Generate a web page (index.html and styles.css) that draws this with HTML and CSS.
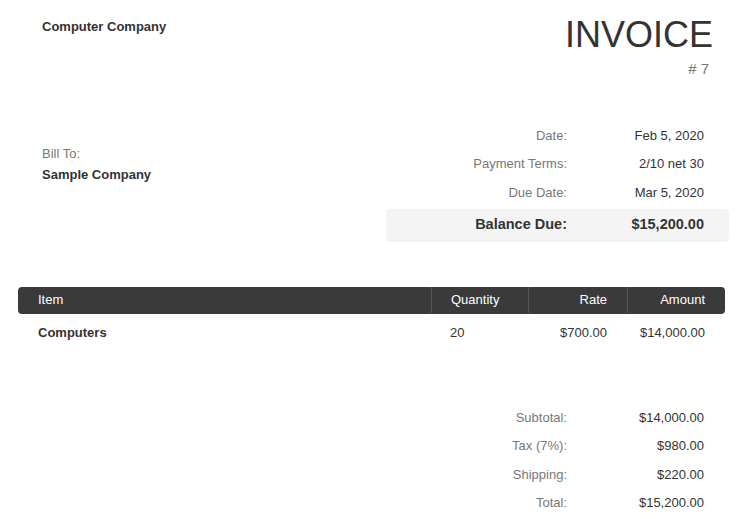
FILE: index.html
```html
<!DOCTYPE html>
<html lang="en">
<head>
<meta charset="utf-8">
<title>Invoice</title>
<link rel="stylesheet" href="styles.css">
</head>
<body>
<div class="page">
  <header class="top">
    <div class="company">Computer Company</div>
    <div class="title-block">
      <div class="title">INVOICE</div>
      <div class="number"># 7</div>
    </div>
  </header>

  <section class="info">
    <div class="bill">
      <div class="bill-label">Bill To:</div>
      <div class="bill-name">Sample Company</div>
    </div>
    <div class="summary meta">
      <div class="srow"><span class="label">Date:</span><span class="value">Feb 5, 2020</span></div>
      <div class="srow"><span class="label">Payment Terms:</span><span class="value">2/10 net 30</span></div>
      <div class="srow"><span class="label">Due Date:</span><span class="value">Mar 5, 2020</span></div>
      <div class="srow balance"><span class="label">Balance Due:</span><span class="value">$15,200.00</span></div>
    </div>
  </section>

  <div class="items">
    <div class="thead">
      <div class="cell c-item">Item</div>
      <div class="cell c-qty sep">Quantity</div>
      <div class="cell c-rate sep">Rate</div>
      <div class="cell c-amt sep">Amount</div>
    </div>
    <div class="trow">
      <div class="cell c-item strong">Computers</div>
      <div class="cell c-qty">20</div>
      <div class="cell c-rate">$700.00</div>
      <div class="cell c-amt">$14,000.00</div>
    </div>
  </div>

  <div class="summary totals">
    <div class="srow"><span class="label">Subtotal:</span><span class="value">$14,000.00</span></div>
    <div class="srow"><span class="label">Tax (7%):</span><span class="value">$980.00</span></div>
    <div class="srow"><span class="label">Shipping:</span><span class="value">$220.00</span></div>
    <div class="srow"><span class="label">Total:</span><span class="value">$15,200.00</span></div>
  </div>
</div>
</body>
</html>
```

FILE: styles.css
```css
* { box-sizing: border-box; }

html, body {
  margin: 0;
  padding: 0;
  background: #ffffff;
}

body {
  font-family: "Liberation Sans", Arial, Helvetica, sans-serif;
  font-size: 13px;
  color: #333333;
}

.page {
  width: 750px;
  height: 519px;
  overflow: hidden;
}

/* header */
.top {
  display: flex;
  justify-content: space-between;
  align-items: flex-start;
  padding: 17px 37px 0 42px;
  height: 121px;
}

.company {
  font-weight: bold;
  line-height: 18px;
  padding-top: 1px;
}

.title-block {
  display: flex;
  flex-direction: column;
  align-items: flex-end;
}

.title {
  font-size: 36px;
  line-height: 36px;
  color: #333333;
}

.number {
  font-size: 15px;
  line-height: 18px;
  color: #777777;
  margin-top: 7px;
  padding-right: 4px;
}

/* info */
.info {
  display: flex;
  justify-content: space-between;
  align-items: flex-start;
  padding-left: 42px;
  padding-right: 21px;
}

.bill {
  padding-top: 21.5px;
  line-height: 21px;
}

.bill-label {
  color: #777777;
}

.bill-name {
  font-weight: bold;
}

.summary {
  width: 343px;
  display: flex;
  flex-direction: column;
}

.srow {
  display: grid;
  grid-template-columns: 181px 1fr;
  height: 28.5px;
  align-items: center;
  padding-right: 25px;
}

.label {
  text-align: right;
  color: #777777;
}

.value {
  text-align: right;
  color: #333333;
}

.balance {
  margin-top: 2.5px;
  height: 33px;
  padding-bottom: 3px;
  background: #f4f4f4;
  border-radius: 4px;
  font-size: 14.5px;
  font-weight: bold;
}

.balance .label {
  color: #333333;
}

/* items table */
.items {
  margin: 45px 25px 0 18px;
}

.thead,
.trow {
  display: grid;
  grid-template-columns: 413px 97px 99px 1fr;
}

.thead {
  height: 27px;
  padding-bottom: 1px;
  background: #3a3a3a;
  border-radius: 4px;
  color: #ffffff;
  align-items: stretch;
}

.thead .cell {
  display: flex;
  align-items: center;
}

.cell {
  padding: 0 20px 0 20px;
  line-height: 16px;
  white-space: nowrap;
}

.sep {
  border-left: 1px solid #555555;
}

.c-qty {
  padding-left: 19px;
}

.c-rate,
.c-amt {
  padding-left: 4px;
  justify-content: flex-end;
  text-align: right;
}

.trow {
  padding: 11px 0 9px;
  line-height: 16px;
}

.trow .c-qty {
  padding-left: 19px;
}

.strong {
  font-weight: bold;
}

/* totals */
.totals {
  margin: 53px 21px 0 auto;
}
```
